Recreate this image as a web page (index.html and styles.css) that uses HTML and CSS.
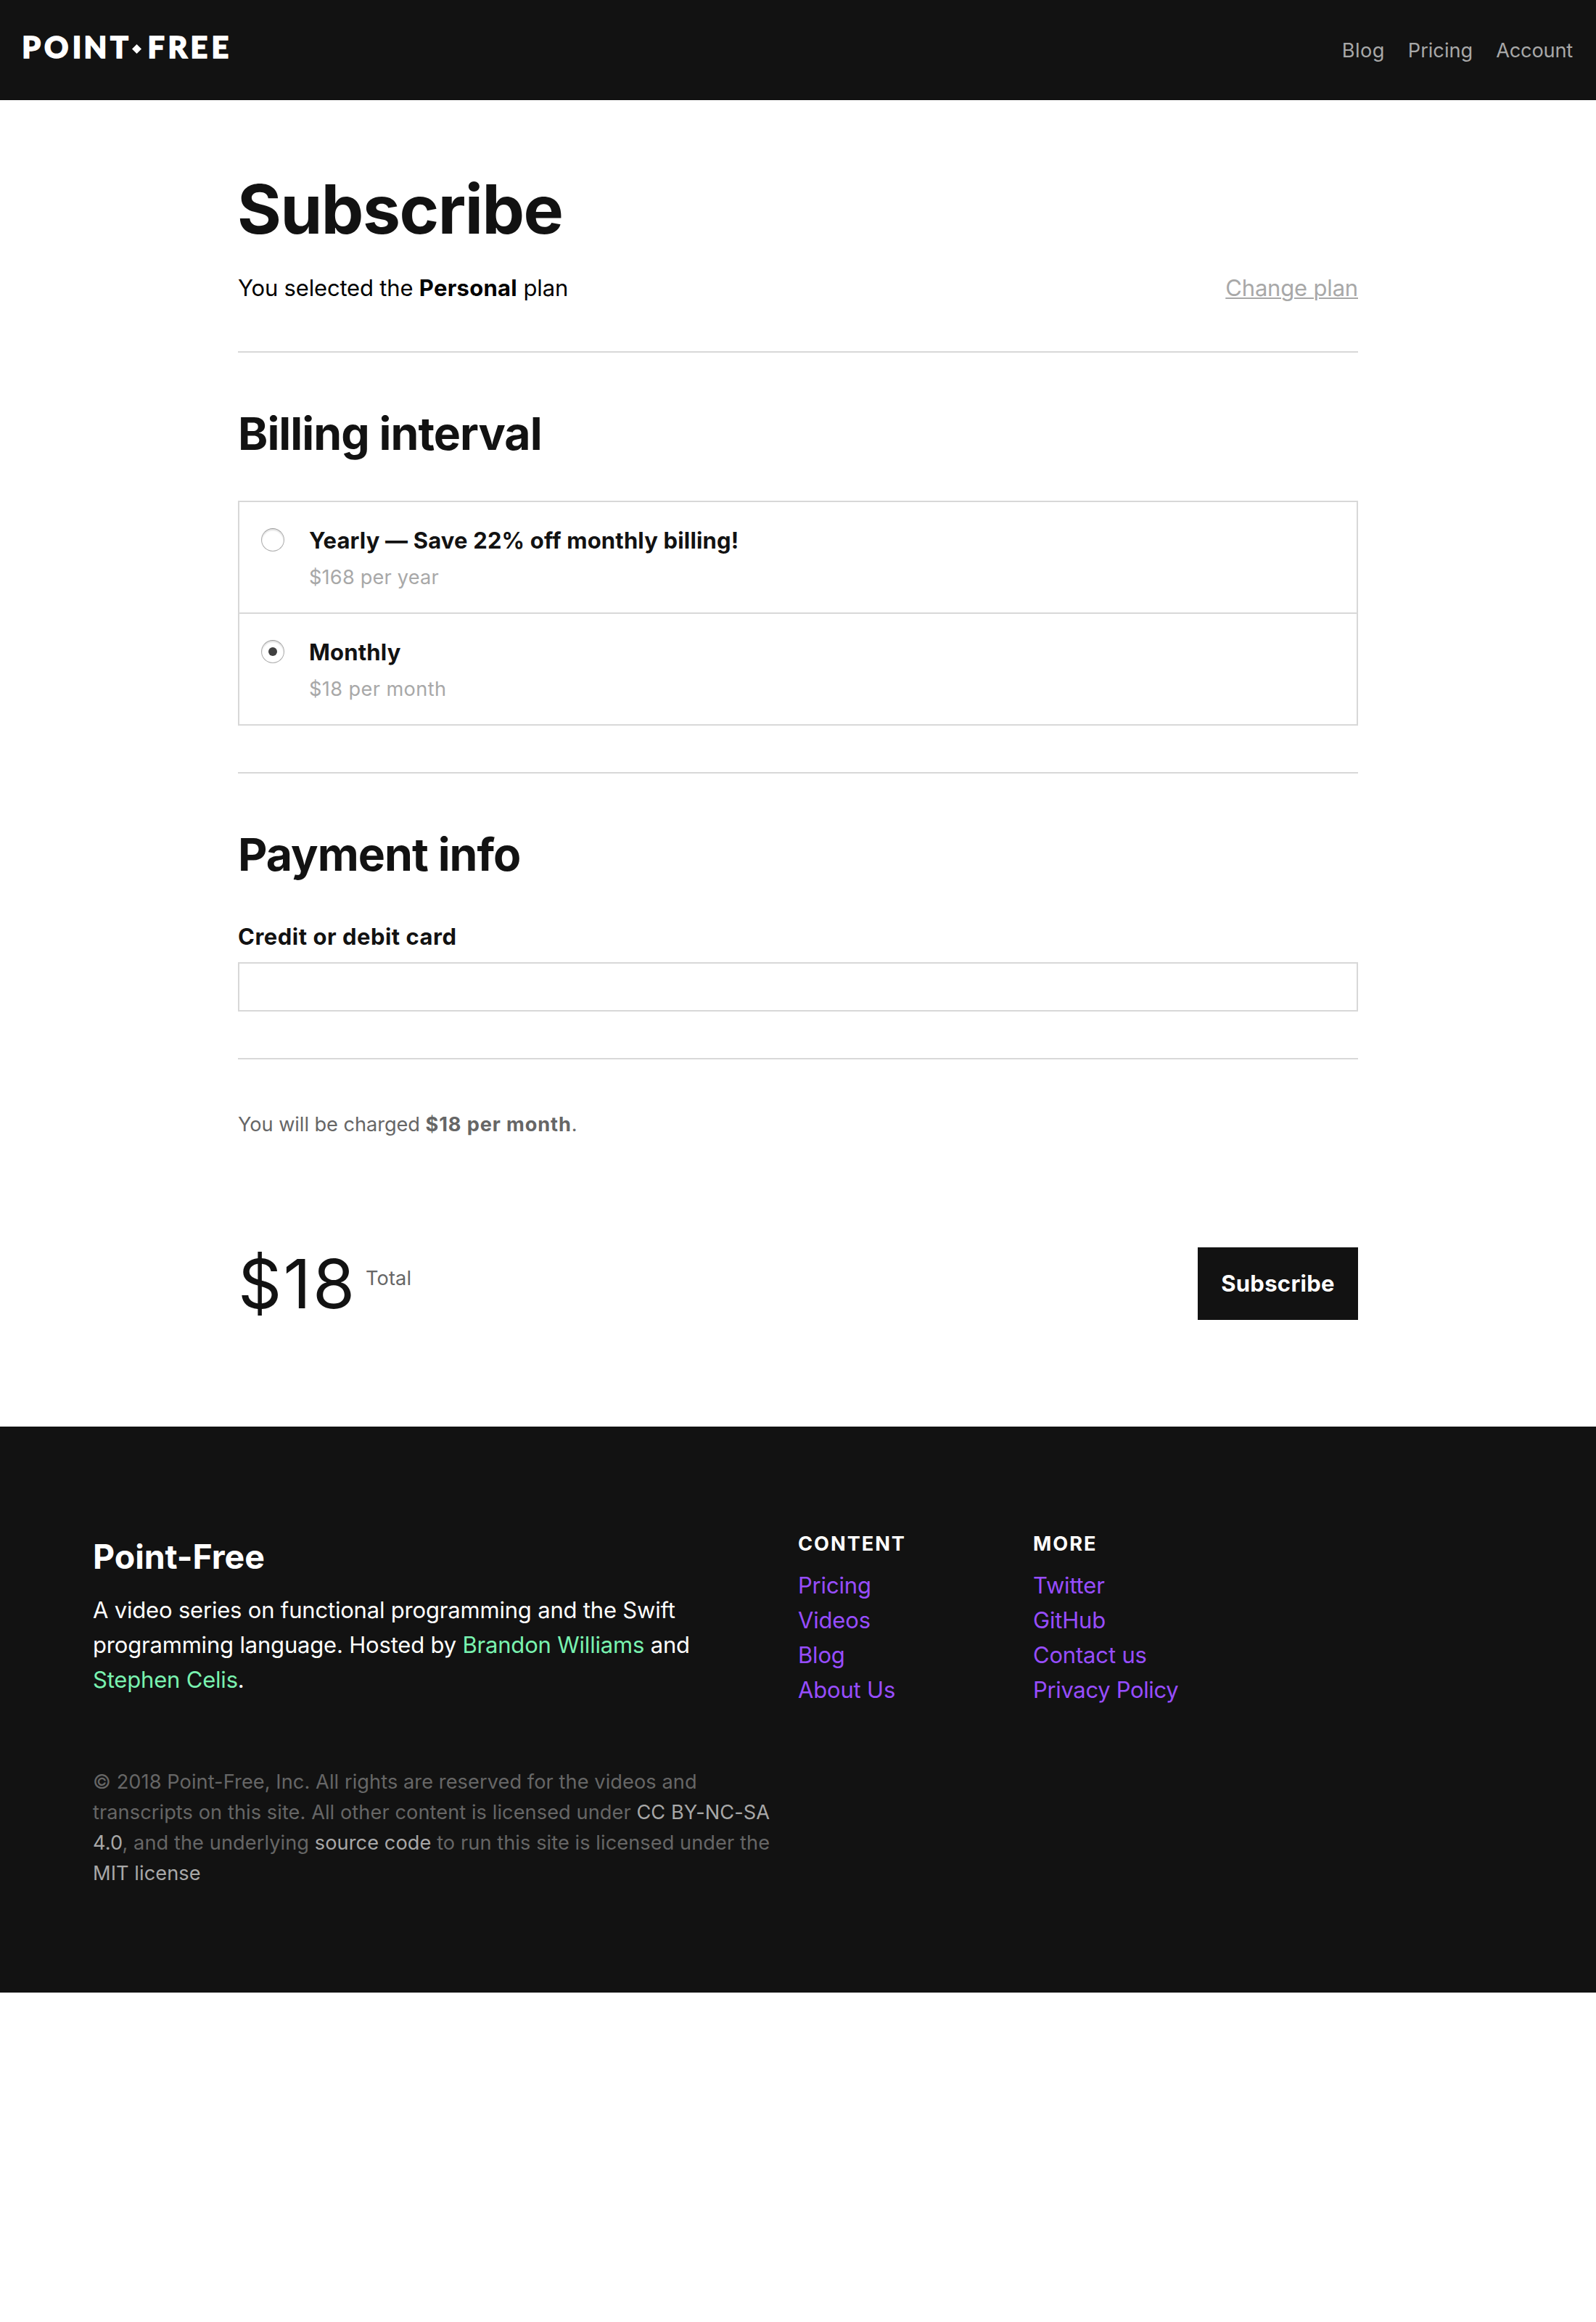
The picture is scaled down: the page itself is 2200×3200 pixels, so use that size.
FILE: index.html
```
<!DOCTYPE html>
<html lang="en">
<head>
<meta charset="utf-8">
<title>Subscribe — Point-Free</title>
<link rel="stylesheet" href="styles.css">
</head>
<body>
<header class="site-header">
  <a class="logo" href="#" aria-label="Point-Free">
    <svg width="290" height="40" viewBox="0 0 290 40">
      <text class="logo-text" y="32.4" x="-1.8 29 67.8 83.6 120">POINT</text>
      <path class="logo-mark" d="M156.5 13l6.5 6.5-6.5 6.5-6.5-6.5z"/>
      <text class="logo-text" y="32.4" x="171.5 199.5 230.5 259.5">FREE</text>
    </svg>
  </a>
  <nav class="site-nav">
    <a class="nav-blog" href="#">Blog</a>
    <a class="nav-pricing" href="#">Pricing</a>
    <a class="nav-account" href="#">Account</a>
  </nav>
</header>

<main class="page">
  <h1 class="title">Subscribe</h1>
  <div class="plan">
    <p>You selected the <strong>Personal</strong> plan</p>
    <a class="plan-change" href="#">Change plan</a>
  </div>
  <hr class="rule">

  <section>
    <h2 class="heading">Billing interval</h2>
    <div class="options">
      <label class="option">
        <span class="radio"></span>
        <span>
          <span class="option-name">Yearly — Save 22% off monthly billing!</span>
          <span class="option-price">$168 per year</span>
        </span>
      </label>
      <label class="option">
        <span class="radio radio-on"></span>
        <span>
          <span class="option-name">Monthly</span>
          <span class="option-price option-price-month">$18 per month</span>
        </span>
      </label>
    </div>
  </section>
  <hr class="rule rule-spaced">

  <section>
    <h2 class="heading">Payment info</h2>
    <h3 class="card-label">Credit or debit card</h3>
    <div class="card-input"></div>
  </section>
  <hr class="rule rule-spaced">

  <p class="charge">You will be charged <strong>$18 per month</strong>.</p>
  <div class="checkout">
    <div class="total">
      <span class="amount">$18</span>
      <span class="total-label">Total</span>
    </div>
    <button class="submit" type="button">Subscribe</button>
  </div>
</main>

<footer class="footer">
  <div class="footer-grid">
    <div class="about">
      <h4 class="brand">Point-Free</h4>
      <p class="description">A video series on functional programming and the Swift<br>programming language. Hosted by <a href="#">Brandon Williams</a> and<br><a href="#">Stephen Celis</a>.</p>
    </div>
    <div class="links">
      <h5 class="links-title">Content</h5>
      <a href="#">Pricing</a>
      <a href="#">Videos</a>
      <a href="#">Blog</a>
      <a href="#">About Us</a>
    </div>
    <div class="links">
      <h5 class="links-title">More</h5>
      <a href="#">Twitter</a>
      <a href="#">GitHub</a>
      <a href="#">Contact us</a>
      <a class="link-privacy" href="#">Privacy Policy</a>
    </div>
  </div>
  <p class="legal">© 2018 Point-Free, Inc. All rights are reserved for the videos and<br>transcripts on this site. All other content is licensed under <a href="#">CC BY-NC-SA<br>4.0</a>, and the underlying <a href="#">source code</a> to run this site is licensed under the<br><a href="#">MIT license</a></p>
</footer>
</body>
</html>
```
FILE: styles.css
```
* {
  box-sizing: border-box;
  margin: 0;
  padding: 0;
}

body {
  background: #fff;
  color: #000;
  font: 400 31px/48px Inter, "Liberation Sans", sans-serif;
  letter-spacing: -0.18px;
}

a {
  color: inherit;
  text-decoration: none;
}

/* Header */
.site-header {
  display: flex;
  justify-content: space-between;
  align-items: flex-start;
  height: 138px;
  padding: 0 32px;
  background: #121212;
}

.logo {
  display: block;
  height: 40px;
  margin-top: 47.5px;
}

.logo svg {
  display: block;
  overflow: visible;
}

.logo-text {
  fill: #fff;
  stroke: #fff;
  stroke-width: 1.6px;
  font: 900 41.2px Lato, sans-serif;
  letter-spacing: 0;
}

.logo-mark { fill: #fff; }

.site-nav {
  display: flex;
  gap: 32px;
  margin-top: 49px;
  color: #a8a8a8;
  font-size: 27.2px;
  line-height: 42px;
}

.nav-blog { letter-spacing: 0.4px; }
.nav-pricing { letter-spacing: 0; }
.nav-account { letter-spacing: -0.2px; }

/* Page body */
.page {
  width: 1544px;
  height: 1828px;
  margin: 0 auto;
  padding-top: 94px;
}

.title {
  margin-left: -1px;
  color: #121212;
  font-size: 93px;
  font-weight: 700;
  line-height: 112px;
  letter-spacing: -1.5px;
}

.plan {
  display: flex;
  justify-content: space-between;
  margin: 29px 0 63px;
}

.plan strong {
  font-weight: 700;
  letter-spacing: 0.27px;
}

.plan-change {
  color: #a8a8a8;
  text-decoration: underline;
  text-decoration-thickness: 2px;
  text-underline-offset: 2px;
}

.rule {
  height: 2px;
  border: 0;
  background: #d8d8d8;
}

.rule-spaced { margin-top: 64px; }

.heading {
  margin: 71px 0 53px;
  color: #121212;
  font-size: 62.5px;
  font-weight: 700;
  line-height: 80px;
  letter-spacing: -0.97px;
}

.options { border: 2px solid #d8d8d8; }

.option {
  display: flex;
  gap: 34px;
  height: 152px;
  padding: 29px 30px 0;
}

.option + .option {
  height: 154px;
  border-top: 2px solid #d8d8d8;
}

.radio {
  display: grid;
  place-items: center;
  width: 32px;
  height: 32px;
  margin-top: 7px;
  border: 1px solid #adadad;
  border-top-color: #999;
  border-radius: 50%;
  box-shadow: inset 0 2px 2px rgba(0, 0, 0, 0.13);
}

.radio-on::after {
  content: "";
  width: 12px;
  height: 12px;
  border-radius: 50%;
  background: #404040;
}

.option-name,
.option-price {
  display: block;
}

.option-name {
  color: #121212;
  font-weight: 700;
  letter-spacing: 0.17px;
}

.option-price {
  margin-top: 6px;
  color: #a8a8a8;
  font-size: 27.2px;
  line-height: 42px;
  letter-spacing: 0.18px;
}

.option-price-month { letter-spacing: 0.38px; }

.card-label {
  margin: -3px 0 11px;
  color: #121212;
  font-size: 31px;
  font-weight: 700;
  letter-spacing: 0.5px;
}

.card-input {
  height: 68px;
  border: 2px solid #d8d8d8;
}

.charge {
  margin-top: 69px;
  color: #666;
  font-size: 27.2px;
  line-height: 42px;
  letter-spacing: -0.06px;
}

.charge strong {
  font-weight: 700;
  letter-spacing: 0.88px;
}

.checkout {
  display: flex;
  justify-content: space-between;
  height: 100px;
  margin-top: 148px;
}

.total {
  display: flex;
  gap: 14px;
}

.amount {
  width: 162px;
  color: #121212;
  font-size: 94px;
  line-height: 101px;
  letter-spacing: 2.2px;
}

.total-label {
  margin-top: 22px;
  color: #666;
  font-size: 27.2px;
  line-height: 42px;
  letter-spacing: 0.12px;
}

.submit {
  width: 221px;
  border: 0;
  background: #121212;
  color: #fff;
  font: inherit;
  font-weight: 700;
  letter-spacing: 0.3px;
}

/* Footer */
.footer {
  height: 780px;
  padding: 141px 128px 0;
  background: #121212;
  color: #fff;
}

.footer-grid {
  display: grid;
  grid-template-columns: 972px 324px 1fr;
}

.brand {
  margin: 2px 0 14px;
  font-size: 46.5px;
  font-weight: 700;
  line-height: 72px;
  letter-spacing: -0.05px;
}

.description {
  letter-spacing: -0.19px;
  white-space: nowrap;
}

.description a { color: #79f2b0; }

.links {
  display: flex;
  flex-direction: column;
  color: #974dff;
}

.links-title {
  margin-bottom: 12px;
  color: #fff;
  font-size: 27.2px;
  font-weight: 700;
  line-height: 42px;
  letter-spacing: 1.95px;
  text-transform: uppercase;
}

.link-privacy { letter-spacing: -0.34px; }

.legal {
  margin-top: 82px;
  color: #666;
  font-size: 27.2px;
  line-height: 42px;
  letter-spacing: 0.07px;
  white-space: nowrap;
}

.legal a { color: #a8a8a8; }
```
